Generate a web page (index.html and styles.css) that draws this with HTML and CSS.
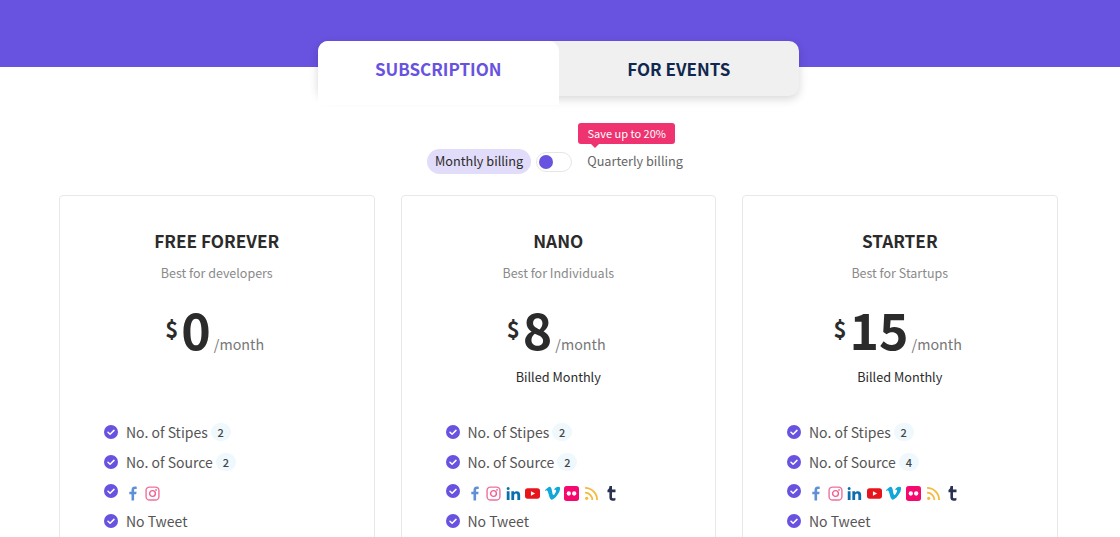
FILE: index.html
```html
<!DOCTYPE html>
<html lang="en">
<head>
<meta charset="utf-8">
<title>Pricing</title>
<link rel="stylesheet" href="styles.css">
</head>
<body>
<svg class="defs" width="0" height="0" aria-hidden="true">
  <symbol id="check" viewBox="0 0 14 14"><circle cx="7" cy="7" r="7" fill="#6852e0"/><path d="M4 7.2l2.1 2L10 5.4" fill="none" stroke="#fff" stroke-width="1.5" stroke-linecap="round" stroke-linejoin="round"/></symbol>
  <symbol id="fb" viewBox="1.500 0.500 11 15"><path d="M8.6 15V8.7h2.1l.4-2.5H8.6V4.700c0-.8.3-1.300 1.300-1.300h1.300V1.200C10.800 1.100 10.100 1 9.400 1 7.400 1 6 2.200 6 4.400v1.800H3.800v2.500H6V15z" fill="#5f8fd6"/></symbol>
  <symbol id="ig" viewBox="0 0 14 14"><rect x="1" y="1" width="12" height="12" rx="3.300" fill="none" stroke="#f0709b" stroke-width="1.300"/><circle cx="7" cy="7" r="2.700" fill="none" stroke="#ee5f90" stroke-width="1.300"/><circle cx="10.300" cy="3.700" r=".8" fill="#ee5f90"/></symbol>
  <symbol id="li" viewBox="0 0 14 14"><path d="M.7 5h2.600v8H.7zM2 1a1.400 1.400 0 1 1 0 2.800A1.400 1.400 0 0 1 2 1zM5 5h2.500v1.100C8 5.300 8.900 4.800 10 4.800c2.300 0 3.200 1.400 3.200 3.700V13h-2.600V9c0-1.100-.3-1.900-1.300-1.900S7.600 7.900 7.600 9v4H5z" fill="#0a6fae"/></symbol>
  <symbol id="yt" viewBox="0 0 16 12"><rect x="0" y="0.500" width="16" height="11" rx="2.800" fill="#e8141c"/><path d="M6.300 3.500L10.800 6l-4.500 2.500z" fill="#fff"/></symbol>
  <symbol id="vm" viewBox="0 0 14 13"><path d="M13.800 3.300c-.1 1.300-1 3.100-2.800 5.400C9.200 11 7.600 12.300 6.300 12.300c-.8 0-1.500-.8-2.100-2.300L3 5.800C2.600 4.300 2.100 3.500 1.600 3.500c-.1 0-.5.200-1.100.7L0 3.300C.7 2.700 1.300 2.100 2 1.500 2.900.7 3.600.3 4.100.2c1.100-.1 1.800.7 2.100 2.300.3 1.800.5 2.900.6 3.300.3 1.400.7 2.100 1.100 2.100.3 0 .8-.5 1.400-1.500.6-.9 1-1.700 1-2.200.1-.8-.3-1.200-1-1.200-.3 0-.7.100-1.100.2C9.100 1.300 10.500.1 12.500.1c1.500 0 2.200 1.100 1.300 3.200z" fill="#11a7d8"/></symbol>
  <symbol id="fl" viewBox="0 0 14 14"><rect width="14" height="14" rx="2.500" fill="#f5096f"/><circle cx="4.500" cy="7" r="2" fill="#fff"/><circle cx="9.500" cy="7" r="2" fill="#fff"/></symbol>
  <symbol id="rs" viewBox="0 0 14 14"><g fill="none" stroke="#f6b93b" stroke-width="1.700"><path d="M1 6.200A6.800 6.800 0 0 1 7.800 13"/><path d="M1 1.800A11.200 11.200 0 0 1 12.200 13"/></g><circle cx="2.500" cy="11.500" r="1.500" fill="#f6b93b"/></symbol>
  <symbol id="tb" viewBox="0 0 10 15"><path d="M3 0h2.500v3.500H9v2.800H5.500v4.600c0 1 .6 1.400 1.400 1.400.7 0 1.300-.2 2-.6v2.500c-.8.400-1.700.6-2.700.6-2 0-3.300-1.100-3.300-3.300V6.300H1V4C2.300 3.400 2.800 1.800 3 0z" fill="#2a3152"/></symbol>
</svg>

<header class="hero"></header>

<nav class="tabs">
  <div class="tab tab-active">SUBSCRIPTION</div>
  <div class="tab tab-idle">FOR EVENTS</div>
</nav>

<section class="billing">
  <span class="bill-on">Monthly billing</span>
  <span class="switch"><span class="knob"></span></span>
  <span class="bill-off">Quarterly billing<span class="save">Save up to 20%</span></span>
</section>

<main class="plans">
  <article class="plan">
    <h2 class="plan-name">FREE FOREVER</h2>
    <p class="plan-sub">Best for developers</p>
    <div class="price"><span class="cur">$</span><span class="amt">0</span><span class="per">/month</span></div>
    <p class="billed">&nbsp;</p>
    <ul class="feats">
      <li class="feat"><svg class="tick"><use href="#check"/></svg>No. of Stipes<span class="num">2</span></li>
      <li class="feat"><svg class="tick"><use href="#check"/></svg>No. of Source<span class="num">2</span></li>
      <li class="feat feat-ic"><svg class="tick"><use href="#check"/></svg><span class="socials">
        <svg class="s s-fb"><use href="#fb"/></svg><svg class="s"><use href="#ig"/></svg>
      </span></li>
      <li class="feat"><svg class="tick"><use href="#check"/></svg>No Tweet</li>
    </ul>
  </article>
  <article class="plan">
    <h2 class="plan-name">NANO</h2>
    <p class="plan-sub">Best for Individuals</p>
    <div class="price"><span class="cur">$</span><span class="amt">8</span><span class="per">/month</span></div>
    <p class="billed">Billed Monthly</p>
    <ul class="feats">
      <li class="feat"><svg class="tick"><use href="#check"/></svg>No. of Stipes<span class="num">2</span></li>
      <li class="feat"><svg class="tick"><use href="#check"/></svg>No. of Source<span class="num">2</span></li>
      <li class="feat feat-ic"><svg class="tick"><use href="#check"/></svg><span class="socials">
        <svg class="s s-fb"><use href="#fb"/></svg><svg class="s"><use href="#ig"/></svg><svg class="s"><use href="#li"/></svg><svg class="s"><use href="#yt"/></svg><svg class="s"><use href="#vm"/></svg><svg class="s"><use href="#fl"/></svg><svg class="s"><use href="#rs"/></svg><svg class="s"><use href="#tb"/></svg>
      </span></li>
      <li class="feat"><svg class="tick"><use href="#check"/></svg>No Tweet</li>
    </ul>
  </article>
  <article class="plan">
    <h2 class="plan-name">STARTER</h2>
    <p class="plan-sub">Best for Startups</p>
    <div class="price"><span class="cur">$</span><span class="amt">15</span><span class="per">/month</span></div>
    <p class="billed">Billed Monthly</p>
    <ul class="feats">
      <li class="feat"><svg class="tick"><use href="#check"/></svg>No. of Stipes<span class="num">2</span></li>
      <li class="feat"><svg class="tick"><use href="#check"/></svg>No. of Source<span class="num">4</span></li>
      <li class="feat feat-ic"><svg class="tick"><use href="#check"/></svg><span class="socials">
        <svg class="s s-fb"><use href="#fb"/></svg><svg class="s"><use href="#ig"/></svg><svg class="s"><use href="#li"/></svg><svg class="s"><use href="#yt"/></svg><svg class="s"><use href="#vm"/></svg><svg class="s"><use href="#fl"/></svg><svg class="s"><use href="#rs"/></svg><svg class="s"><use href="#tb"/></svg>
      </span></li>
      <li class="feat"><svg class="tick"><use href="#check"/></svg>No Tweet</li>
    </ul>
  </article>
</main>
</body>
</html>
```
FILE: styles.css
```css
* { box-sizing: border-box; }
html, body { margin: 0; padding: 0; height: 537px; overflow: hidden; background: #fff; }
body { font-family: "Noto Sans CJK JP", "Liberation Sans", sans-serif; color: #2b2b2b; }
.defs { position: absolute; }

.hero { height: 67px; background: #6852e0; }

.tabs {
  display: flex;
  width: 481px;
  height: 55px;
  margin: -26px 0 0 318px;
  position: relative;
  border-radius: 10px;
  box-shadow: 0 3px 10px rgba(0, 0, 0, .16);
  background: #f0f0f0;
}
.tab {
  flex: 1;
  height: 55px;
  line-height: 55px;
  text-align: center;
  font-size: 17px;
  font-weight: 700;
}
.tab-active {
  height: 64px;
  color: #6852e0;
  background: #fff;
  border-radius: 10px 10px 0 0;
}
.tab-idle { color: #10284f; border-radius: 0 10px 10px 0; }

.billing {
  display: flex;
  align-items: center;
  justify-content: center;
  height: 25px;
  margin-top: 53px;
  padding-right: 10px;
  font-size: 12.700px;
}
.bill-on {
  height: 25px;
  line-height: 24px;
  padding: 0 8px;
  border-radius: 12.500px;
  background: #e1dcf9;
  color: #2b2b2b;
}
.switch {
  display: flex;
  align-items: center;
  width: 36px;
  height: 20px;
  margin: 0 15px 0 5px;
  padding-left: 2px;
  border: 1px solid #e6e6e6;
  border-radius: 10px;
  background: #fff;
}
.knob { width: 14px; height: 14px; border-radius: 50%; background: #6852e0; }
.bill-off { position: relative; top: -1px; color: #666; line-height: 23px; }
.save {
  position: absolute;
  left: -9px;
  top: -26px;
  width: 97px;
  height: 21px;
  line-height: 20px;
  text-align: center;
  font-size: 11px;
  color: #fff;
  background: #ee3370;
  border-radius: 3px;
}
.save::after {
  content: "";
  position: absolute;
  left: 13px;
  bottom: -4px;
  border: 4px solid transparent;
  border-bottom: 0;
  border-top-color: #ee3370;
}

.plans {
  display: grid;
  grid-template-columns: repeat(3, 315.500px);
  column-gap: 26px;
  justify-content: start;
  margin-top: 21px;
  padding-left: 59px;
}
.plan {
  height: 420px;
  padding-top: 32px;
  border: 1px solid #e8e8e8;
  border-radius: 4px;
  text-align: center;
}
.plan-name { margin: 0; font-size: 17.200px; line-height: 26px; font-weight: 700; color: #2b2b2b; }
.plan-sub { margin: 9px 0 0; font-size: 12.500px; line-height: 20px; color: #8a8a8a; }
.price {
  display: flex;
  align-items: baseline;
  justify-content: center;
  margin-top: 15px;
  padding-right: 4px;
  height: 60px;
  line-height: 60px;
}
.cur { font-size: 22px; font-weight: 700; position: relative; top: -12px; margin-right: 3px; }
.amt { font-size: 50px; font-weight: 700; }
.per { font-size: 14.300px; color: #777; margin-left: 3px; }
.billed { margin: 9px 0 0; font-size: 12.700px; line-height: 20px; color: #2b2b2b; }

.feats { list-style: none; margin: 30px 0 0; padding: 0 0 0 44px; text-align: left; }
.feat {
  display: flex;
  align-items: center;
  height: 30px;
  font-size: 14px;
  color: #555;
}
.feat-ic { height: 31px; }
.feat-ic + .feat { height: 26px; }
.tick { width: 14px; height: 14px; margin-right: 8px; flex: none; }
.feat-ic .tick { margin-top: -3px; }
.num {
  display: inline-block;
  min-width: 20px;
  height: 18px;
  line-height: 18px;
  margin-left: 3px;
  border-radius: 9px;
  background: #eff8fd;
  text-align: center;
  font-size: 11px;
  font-weight: 500;
  color: #444;
}
.socials { display: flex; align-items: center; gap: 4.600px; margin: 2px 0 0 -1px; }
.s { width: 15px; height: 15px; }
```
